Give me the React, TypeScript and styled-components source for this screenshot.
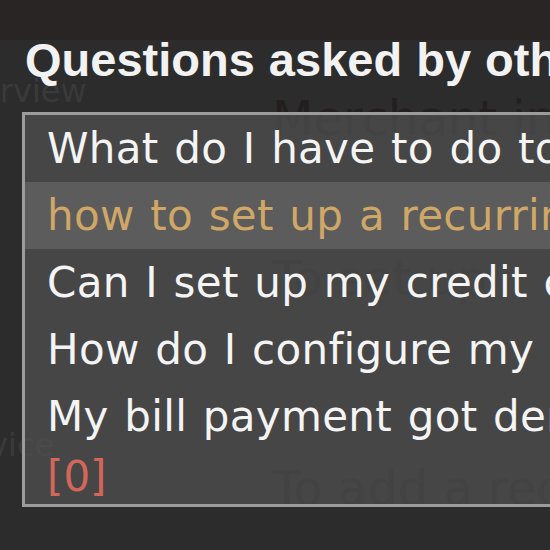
import { ReactElement } from 'react';
import styled, { createGlobalStyle } from 'styled-components';

const GlobalStyle = createGlobalStyle`
  html, body {
    margin: 0;
    padding: 0;
    background: #2c2c2c;
    overflow: hidden;
  }
`;

const Page = styled.div`
  position: relative;
  width: 550px;
  height: 550px;
  overflow: hidden;
  background: #2c2c2c;
  font-family: 'DejaVu Sans', Verdana, sans-serif;
`;

const TopBar = styled.div`
  height: 40px;
  background: #2a2525;
`;

// the page under the popup, scrolled a little to the right
const Canvas = styled.div`
  display: flex;
  margin-left: -64px;
`;

const Sidebar = styled.nav`
  flex-shrink: 0;
  width: 336px;
  display: flex;
  flex-direction: column;
  gap: 316px;
  padding-top: 32px;
`;

const NavItem = styled.div`
  font-size: 32px;
  line-height: 38px;
  color: #3a3a3a;
`;

const Main = styled.main`
  display: flex;
  flex-direction: column;
  padding-top: 48px;
`;

const Heading = styled.div<{ $space?: number }>`
  margin-top: ${(p) => p.$space ?? 0}px;
  font-size: 48px;
  line-height: 60px;
  color: #231f1f;
  white-space: nowrap;
`;

const Popup = styled.section`
  position: absolute;
  top: 37px;
  left: 22px;
`;

const Title = styled.h2`
  margin: 0 0 29px 3px;
  font-family: 'Liberation Sans', Arial, sans-serif;
  font-size: 47px;
  line-height: 46px;
  font-weight: 700;
  word-spacing: 1px;
  color: #f2f2f2;
  white-space: nowrap;
`;

const List = styled.ul`
  width: 700px;
  margin: 0;
  padding: 0;
  list-style: none;
  border: 3px solid #9c9c9c;
  background: rgba(80, 80, 80, 0.74);
`;

const Row = styled.li<{ $active?: boolean }>`
  padding-left: 22px;
  font-size: 42px;
  line-height: 67px;
  letter-spacing: 0.3px;
  word-spacing: 2px;
  white-space: nowrap;
  color: ${(p) => (p.$active ? '#cfa766' : '#f4f4f4')};
  background: ${(p) => (p.$active ? '#5c5c5c' : 'transparent')};
`;

const Count = styled.li`
  padding-left: 22px;
  font-size: 42px;
  line-height: 54px;
  color: #d2665a;
`;

const questions = [
  'What do I have to do to pay a bill?',
  'how to set up a recurring payment',
  'Can I set up my credit card?',
  'How do I configure my account?',
  'My bill payment got denied',
];

const App = (): ReactElement => {
  return (
    <>
      <GlobalStyle />
      <Page>
        <TopBar />
        <Canvas>
          <Sidebar>
            <NavItem>Overview</NavItem>
            <NavItem>Service</NavItem>
          </Sidebar>
          <Main>
            <Heading>Merchant info</Heading>
            <Heading $space={100}>To set up</Heading>
            <Heading $space={150}>To add a recipient</Heading>
          </Main>
        </Canvas>
        <Popup>
          <Title>Questions asked by others</Title>
          <List>
            {questions.map((q, i) => (
              <Row key={q} $active={i === 1}>
                {q}
              </Row>
            ))}
            <Count>[0]</Count>
          </List>
        </Popup>
      </Page>
    </>
  );
};

export default App;
